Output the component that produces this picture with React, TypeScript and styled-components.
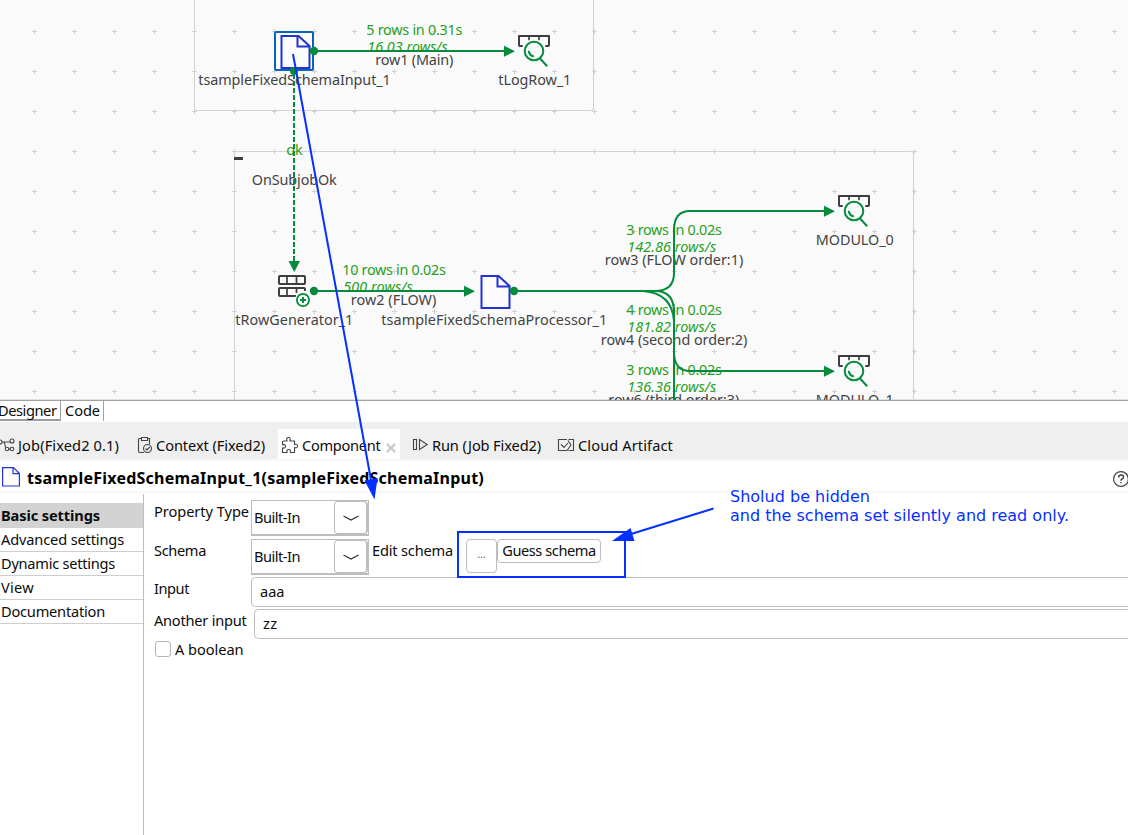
import React, { useLayoutEffect, useRef, useState } from "react";
import styled, { createGlobalStyle } from "styled-components";

const GREEN = "#058a3e";
const STAT = "#27a022";
const INK = "#434343";
const BLUE = "#0530ff";
const FONT = '"Noto Sans", "Open Sans", sans-serif';

const Global = createGlobalStyle`
  *, *::before, *::after { box-sizing: border-box; }
  body { margin: 0; background: #fff; color: #0c0c0c; font: 14.6px/20px ${FONT}; overflow: hidden; }
  input, button { font: inherit; color: inherit; }
`;

/* ---------- text that fills a given advance width ---------- */

const FitSpan = styled.span`
  display: inline-block;
  white-space: pre;
`;

function Fit({ text, w }: { text: string; w: number }) {
  const ref = useRef<HTMLSpanElement>(null);
  const [spacing, setSpacing] = useState(0);
  useLayoutEffect(() => {
    const el = ref.current;
    if (el) setSpacing((w - el.getBoundingClientRect().width) / text.length);
  }, [text, w]);
  return (
    <FitSpan ref={ref} style={{ letterSpacing: `${spacing}px` }}>
      {text}
    </FitSpan>
  );
}

/* ---------- designer canvas ---------- */

const Window = styled.main`
  position: relative;
  display: flex;
  flex-direction: column;
  width: 1128px;
  height: 835px;
  overflow: hidden;
  background: #fff;
`;

const Canvas = styled.section`
  flex: 0 0 401px;
  border-bottom: 1px solid #a2a2a2;
  background: #fafafa;
  box-shadow: inset 0 -1px 0 #e2e2e2;
`;

const Diagram = styled.svg`
  display: block;
  width: 1128px;
  height: 400px;
`;

const DiagramText = styled.text<{ $italic?: boolean }>`
  font-family: ${FONT};
  font-size: 14.4px;
  font-style: ${(p) => (p.$italic ? "italic" : "normal")};
`;

type LabelProps = { x: number; to: number; y: number; text: string; stat?: boolean; italic?: boolean };

const Label = ({ x, to, y, text, stat, italic }: LabelProps) => (
  <DiagramText
    x={italic ? x - 0.8 : x - 0.2}
    y={y}
    textLength={to - x + 0.5}
    fill={stat ? STAT : INK}
    $italic={italic}
  >
    {text}
  </DiagramText>
);

const labels: LabelProps[] = [
  { x: 366.5, to: 462, y: 35, text: "5 rows in 0.31s", stat: true },
  { x: 368, to: 448, y: 52, text: "16.03 rows/s", stat: true, italic: true },
  { x: 375.5, to: 453, y: 65, text: "row1 (Main)" },
  { x: 198.5, to: 390.5, y: 85, text: "tsampleFixedSchemaInput_1" },
  { x: 498.5, to: 571, y: 85, text: "tLogRow_1" },
  { x: 286.5, to: 302.5, y: 155, text: "ok", stat: true },
  { x: 252, to: 336.5, y: 185, text: "OnSubjobOk" },
  { x: 342.5, to: 445.5, y: 275, text: "10 rows in 0.02s", stat: true },
  { x: 344, to: 413, y: 292, text: "500 rows/s", stat: true, italic: true },
  { x: 351, to: 436, y: 305, text: "row2 (FLOW)" },
  { x: 235.5, to: 353, y: 325, text: "tRowGenerator_1" },
  { x: 381.5, to: 607, y: 325, text: "tsampleFixedSchemaProcessor_1" },
  { x: 626.5, to: 721.5, y: 235, text: "3 rows in 0.02s", stat: true },
  { x: 628, to: 716.5, y: 252, text: "142.86 rows/s", stat: true, italic: true },
  { x: 605, to: 743, y: 265, text: "row3 (FLOW order:1)" },
  { x: 626.5, to: 721.5, y: 315, text: "4 rows in 0.02s", stat: true },
  { x: 628, to: 716.5, y: 332, text: "181.82 rows/s", stat: true, italic: true },
  { x: 601, to: 747, y: 345, text: "row4 (second order:2)" },
  { x: 626.5, to: 721.5, y: 375, text: "3 rows in 0.02s", stat: true },
  { x: 628, to: 716.5, y: 392, text: "136.36 rows/s", stat: true, italic: true },
  { x: 608.5, to: 739, y: 405, text: "row6 (third order:3)" },
  { x: 816, to: 893.5, y: 245, text: "MODULO_0" },
  { x: 816, to: 893.5, y: 405, text: "MODULO_1" },
];

const FileNode = ({ x, y }: { x: number; y: number }) => (
  <g transform={`translate(${x} ${y})`} fill="none" stroke="#2233cf" strokeWidth="2">
    <path d="M1.5 1.5H18.5L29.5 11.5V33.5H1.5Z" fill="#fcfcff" />
    <path d="M17.5 1.5V12H29.5" />
  </g>
);

const LogNode = ({ x, y }: { x: number; y: number }) => (
  <g transform={`translate(${x} ${y})`} fill="none" strokeLinecap="round">
    <g stroke="#403c40" strokeWidth="2">
      <path d="M4 11H2Q1 11 1 10V1H31V10Q31 11 30 11H28" strokeLinejoin="round" />
      <path d="M11 1V4.5M21 1V4.5" strokeWidth="1.7" />
    </g>
    <g stroke={GREEN} strokeWidth="2">
      <circle cx="16" cy="16" r="9.3" fill="#fafafa" />
      <path d="M10.8 16.5Q11.5 20 15 21.3" />
      <path d="M22.5 24L28.5 30.5" strokeLinecap="square" />
    </g>
  </g>
);

const GeneratorNode = () => (
  <g fill="none" stroke="#403c40" strokeWidth="2">
    <rect x="279" y="276" width="26" height="8" rx="1" />
    <path d="M287 276V284M296.5 276V284M287 288V296M296.5 288V293" strokeWidth="1.7" />
    <path d="M296 296H280Q279 296 279 295V289Q279 288 280 288H304Q305 288 305 289V291" />
    <circle cx="303" cy="300" r="8" fill="#fafafa" stroke="none" />
    <circle cx="303" cy="300" r="6.1" stroke={GREEN} strokeWidth="1.8" />
    <path d="M300 300H306M303 297V303" stroke={GREEN} strokeWidth="1.9" />
  </g>
);

const ArrowHead = ({ x, y }: { x: number; y: number }) => (
  <path d={`M${x - 11} ${y - 5.5}L${x} ${y}L${x - 11} ${y + 5.5}Z`} fill={GREEN} />
);

const Designer = () => (
  <Canvas>
    <Diagram viewBox="0 0 1128 400">
      <defs>
        <pattern id="plus" width="40" height="40" patternUnits="userSpaceOnUse" x="14" y="11">
          <path d="M18 20.5H23M20.5 18V23" stroke="#d3d3d3" fill="none" />
        </pattern>
      </defs>
      <rect width="1128" height="400" fill="url(#plus)" />
      <g fill="none" stroke="#d1d1d1">
        <path d="M194.5 0V108.5Q194.5 110.5 196.5 110.5H591.5Q593.5 110.5 593.5 108.5V0" />
        <path d="M234.5 400V153.5Q234.5 151.5 236.5 151.5H911.5Q913.5 151.5 913.5 153.5V400" />
      </g>
      <rect x="234" y="157" width="9" height="3" fill="#403c40" />

      <rect x="275" y="32" width="38" height="38" rx="1" fill="#fcfcfc" stroke="#0764b8" strokeWidth="2" />
      <FileNode x={280} y={34.5} />
      <FileNode x={480} y={274.5} />
      <LogNode x={518} y={35} />
      <LogNode x={838} y={195} />
      <LogNode x={838} y={355} />
      <GeneratorNode />

      {labels.map((l) => (
        <Label key={`${l.x}-${l.y}`} {...l} />
      ))}

      <g fill="none" stroke={GREEN} strokeWidth="2">
        <path d="M314 51H505M314 291H465" />
        <path d="M294 74V262" strokeDasharray="5 2" />
        <path d="M514 291H655Q674 291 674 273V230Q674 211 690 211H825" />
        <path d="M655 291Q674 291 674 312V400" />
        <path d="M643 291Q672 293 674 321" />
        <path d="M674 354Q675 371 690 371H825" />
      </g>
      <g fill={GREEN}>
        <circle cx="314" cy="51" r="4.2" />
        <circle cx="294" cy="71" r="4" />
        <circle cx="314" cy="291" r="4.2" />
        <circle cx="514" cy="291" r="4.2" />
        <path d="M288.5 261H300L294.3 272Z" />
      </g>
      <ArrowHead x={515} y={51.3} />
      <ArrowHead x={475} y={291.3} />
      <ArrowHead x={835} y={211.3} />
      <ArrowHead x={835} y={371.3} />
    </Diagram>
  </Canvas>
);

/* ---------- editor tabs and view tabs ---------- */

const EditorTabs = styled.nav`
  display: flex;
  flex: 0 0 21px;
  height: 21px;
`;

const EditorTab = styled.div<{ $w: number; $active?: boolean }>`
  width: ${(p) => p.$w}px;
  height: 20px;
  padding-left: ${(p) => (p.$active ? 0 : 4)}px;
  border-right: 1px solid #a2a2a2;
  border-bottom: ${(p) => (p.$active ? "2px solid #9c9c9c" : "0")};
  line-height: 19px;
  white-space: nowrap;
`;

const DesignerText = styled.span`
  display: block;
  margin-left: -2px;
`;

const ViewTabs = styled.nav`
  display: flex;
  flex: 0 0 39px;
  align-items: flex-end;
  background: #efefef;
  border-bottom: 2px solid #f8f8f8;
`;

const ViewTab = styled.div<{ $w: number; $pad: number; $gap: number; $active?: boolean }>`
  display: flex;
  align-items: center;
  gap: ${(p) => p.$gap}px;
  width: ${(p) => p.$w}px;
  height: 30px;
  padding: 1px 0 0 ${(p) => p.$pad}px;
  background: ${(p) => (p.$active ? "#fff" : "transparent")};
  white-space: nowrap;
`;

const TabIcon = styled.svg`
  flex: none;
  display: block;
  overflow: visible;
  fill: none;
  stroke: #444;
  stroke-width: 1.1;
`;

const CloseIcon = styled(TabIcon)`
  margin: 7px 0 0 1px;
  stroke: #c9c9c9;
  stroke-width: 2.2;
`;

const Tabs = () => (
  <>
    <EditorTabs>
      <EditorTab $w={61} $active>
        <DesignerText>
          <Fit text="Designer" w={58.5} />
        </DesignerText>
      </EditorTab>
      <EditorTab $w={43}>
        <Fit text="Code" w={35} />
      </EditorTab>
    </EditorTabs>
    <ViewTabs>
      <ViewTab $w={137} $pad={0} $gap={3}>
        <TabIcon width="15" height="16">
          <circle cx="0" cy="5" r="2" />
          <circle cx="12" cy="4" r="2" />
          <circle cx="7" cy="12" r="1.8" />
          <circle cx="12" cy="12" r="1.8" />
          <path d="M2 5H10M4 5Q5 7 5.5 10.5M8.8 12H10.2" />
        </TabIcon>
        <Fit text="Job(Fixed2 0.1)" w={101} />
      </ViewTab>
      <ViewTab $w={141} $pad={1} $gap={4}>
        <TabIcon width="14" height="16">
          <path d="M4 1.5H1.5Q0.5 1.5 0.5 2.5V14Q0.5 15.5 2 15.5H6M9 1.5H11.5V7M3.5 0.5H9.5V3.5H3.5Z" />
          <circle cx="9.5" cy="11.5" r="4" />
          <path d="M7.5 11.5L9 13L11.8 10" />
        </TabIcon>
        <Fit text="Context (Fixed2)" w={109} />
      </ViewTab>
      <ViewTab $w={122} $pad={4} $gap={4} $active>
        <TabIcon width="16" height="16">
          <path d="M1 4H5Q4 0.5 6.5 0.5Q9 0.5 8 4H12.5V7.5Q15.5 6.5 15.5 9Q15.5 11.5 12.5 10.5V15.5H8.5Q9 12.5 6.5 12.5Q4.5 12.5 5 15.5H0.5V11Q3.5 11.5 3.5 9.5Q3.5 7 0.5 7.8V4" />
        </TabIcon>
        <Fit text="Component" w={78.5} />
        <CloseIcon width="10" height="10">
          <path d="M1 1L9 9M9 1L1 9" />
        </CloseIcon>
      </ViewTab>
      <ViewTab $w={146} $pad={13} $gap={4}>
        <TabIcon width="15" height="14">
          <rect x="0.5" y="1.5" width="3" height="10" />
          <path d="M6.5 1.5V11.5L14.2 6.5Z" />
        </TabIcon>
        <Fit text="Run (Job Fixed2)" w={109} />
      </ViewTab>
      <ViewTab $w={140} $pad={12} $gap={4}>
        <TabIcon width="16" height="14">
          <path d="M9 1.5H0.5V12.5H9L13 7L10 2.5M10.5 1.5H15.5V12.5H10.5M3 6.5L6 9.5L10 5" />
        </TabIcon>
        <Fit text="Cloud Artifact" w={95} />
      </ViewTab>
    </ViewTabs>
  </>
);

/* ---------- component header ---------- */

const Header = styled.header`
  display: flex;
  flex: 0 0 32px;
  align-items: center;
  padding-left: 2px;
  border-bottom: 2px solid #f7f7f7;
  color: #000;
`;

const FileIcon = styled.svg`
  flex: none;
  margin-top: 2px;
`;

const Title = styled.h1`
  flex: 1;
  margin: 3px 0 0 6px;
  font-size: 16px;
  font-weight: 700;
  line-height: 22px;
`;

const HelpIcon = styled.svg`
  flex: none;
  margin: 5px -1px 0 0;
  overflow: visible;
`;

const ComponentHeader = () => (
  <Header>
    <FileIcon width="19" height="20" fill="none" stroke="#2233cf" strokeWidth="1.2">
      <path d="M0.6 0.6H11.5L17.4 6.5V19H0.6ZM11 0.6V6.6H17.4" />
    </FileIcon>
    <Title>
      <Fit text="tsampleFixedSchemaInput_1(sampleFixedSchemaInput)" w={457} />
    </Title>
    <HelpIcon width="16" height="16" fill="none" stroke="#444" strokeWidth="1.2">
      <circle cx="8" cy="8" r="7.4" />
      <path d="M5.6 6.5Q5.6 4 8 4Q10.5 4 10.5 6Q10.5 7.2 9 8Q8 8.6 8 9.8M8 11V12.3" strokeWidth="1.5" />
    </HelpIcon>
  </Header>
);

/* ---------- settings ---------- */

const Body = styled.div`
  display: flex;
  flex: 1;
`;

const SideNav = styled.nav`
  flex: 0 0 144px;
  margin-top: 1px;
  padding-top: 9px;
  border-right: 1px solid #bdbdbd;
`;

const NavItem = styled.div<{ $active?: boolean }>`
  height: ${(p) => (p.$active ? 25 : 24)}px;
  padding: ${(p) => (p.$active ? 2 : 1)}px 0 0 1px;
  border-bottom: ${(p) => (p.$active ? "0" : "1px solid #cecece")};
  background: ${(p) => (p.$active ? "#d3d3d3" : "#fff")};
  font-weight: ${(p) => (p.$active ? 700 : 400)};
  white-space: nowrap;
`;

const Form = styled.form`
  display: flex;
  flex: 1;
  flex-direction: column;
  padding: 7px 0 0 10px;
`;

const Row = styled.div<{ $h: number }>`
  display: flex;
  height: ${(p) => p.$h}px;
  align-items: flex-start;
`;

const FieldLabel = styled.label<{ $w: number }>`
  flex: 0 0 ${(p) => p.$w}px;
  padding-top: 1px;
  white-space: nowrap;
`;

const EditLabel = styled(FieldLabel)`
  padding-left: 3px;
`;

const Combo = styled.div`
  display: flex;
  justify-content: space-between;
  width: 118px;
  height: 36px;
  padding-left: 2px;
  border: 1px solid #bdbdbd;
  border-bottom-width: 2px;
  line-height: 32px;
`;

const ComboButton = styled.span`
  display: grid;
  place-items: center;
  width: 34px;
  height: 33px;
  border: 1px solid #bdbdbd;
  border-right-width: 2px;
  border-radius: 4px;
`;

const Field = styled.div`
  flex: 1;
  height: 30px;
  padding-left: 8px;
  border: 1px solid #bdbdbd;
  border-right: 0;
  border-radius: 5px 0 0 5px;
  line-height: 26px;
`;

const PushButton = styled.button<{ $w: number; $h: number }>`
  width: ${(p) => p.$w}px;
  height: ${(p) => p.$h}px;
  padding: 0 0 2px;
  border: 1px solid #bdbdbd;
  border-radius: 4px;
  background: #fff;
  line-height: 20px;
  white-space: nowrap;
`;

const Dots = styled.span`
  display: block;
  margin-top: -3px;
  font-size: 10px;
  color: #555;
`;

const CheckBox = styled.span`
  width: 16px;
  height: 16px;
  margin: 0 4px 0 1px;
  border: 1px solid #b5b5b5;
  border-radius: 3px;
`;

const CheckLabel = styled.span`
  margin-top: -2px;
`;

const BuiltIn = () => (
  <Combo>
    <Fit text="Built-In" w={46} />
    <ComboButton>
      <svg width="16" height="8" fill="none" stroke="#333" strokeWidth="1.2">
        <path d="M0.5 2L8 6L15.5 2" />
      </svg>
    </ComboButton>
  </Combo>
);

const sections: [string, number][] = [
  ["Basic settings", 99],
  ["Advanced settings", 123],
  ["Dynamic settings", 114],
  ["View", 33],
  ["Documentation", 104],
];

const Settings = () => (
  <Body>
    <SideNav>
      {sections.map(([name, w], i) => (
        <NavItem key={name} $active={i === 0}>
          <Fit text={name} w={w} />
        </NavItem>
      ))}
    </SideNav>
    <Form>
      <Row $h={39}>
        <FieldLabel $w={97}>
          <Fit text="Property Type" w={95} />
        </FieldLabel>
        <BuiltIn />
      </Row>
      <Row $h={38}>
        <FieldLabel $w={97}>
          <Fit text="Schema" w={52} />
        </FieldLabel>
        <BuiltIn />
        <EditLabel $w={97}>
          <Fit text="Edit schema" w={81} />
        </EditLabel>
        <PushButton type="button" $w={31} $h={34}>
          <Dots>...</Dots>
        </PushButton>
        <PushButton type="button" $w={104} $h={24}>
          <Fit text="Guess schema" w={93.5} />
        </PushButton>
      </Row>
      <Row $h={32}>
        <FieldLabel $w={97}>
          <Fit text="Input" w={35} />
        </FieldLabel>
        <Field>
          <Fit text="aaa" w={24.5} />
        </Field>
      </Row>
      <Row $h={32}>
        <FieldLabel $w={100}>
          <Fit text="Another input" w={92.5} />
        </FieldLabel>
        <Field>
          <Fit text="zz" w={14.5} />
        </Field>
      </Row>
      <Row $h={20}>
        <CheckBox />
        <CheckLabel>
          <Fit text="A boolean" w={68.5} />
        </CheckLabel>
      </Row>
    </Form>
  </Body>
);

/* ---------- drawn annotations over the window ---------- */

const Annotations = styled.svg`
  position: absolute;
  inset: 0;
  width: 1128px;
  height: 835px;
  pointer-events: none;
`;

const Note = styled.text`
  font-family: "DejaVu Sans", sans-serif;
  font-size: 16px;
  fill: ${BLUE};
`;

export default function App() {
  return (
    <>
      <Global />
      <Window>
        <Designer />
        <Tabs />
        <ComponentHeader />
        <Settings />
        <Annotations viewBox="0 0 1128 835">
          <g fill="none" stroke={BLUE} strokeWidth="2">
            <path d="M293 54L371 480" />
            <path d="M713.5 508.5L631 534" />
            <rect x="458" y="532" width="167" height="45" />
          </g>
          <path d="M364.5 480.5L377.5 478L374.5 499.5Z" fill={BLUE} />
          <path d="M630.5 528L634.5 541H612Z" fill={BLUE} />
          <Note x="730" y="502" textLength="140">
            Sholud be hidden
          </Note>
          <Note x="730" y="521" textLength="339">
            and the schema set silently and read only.
          </Note>
        </Annotations>
      </Window>
    </>
  );
}
